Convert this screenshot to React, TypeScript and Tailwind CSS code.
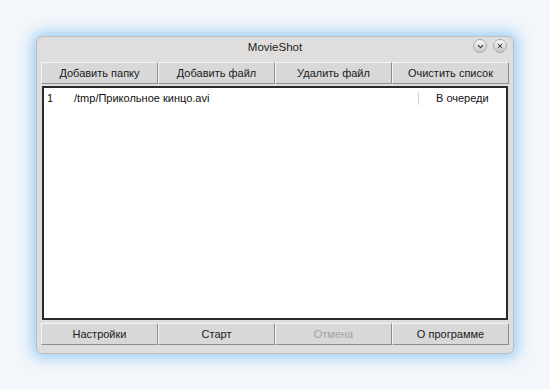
import { X, ChevronDown } from "lucide-react";

const font = { fontFamily: '"Liberation Sans", Arial, sans-serif' };

function Btn({ label, disabled }: { label: string; disabled?: boolean }) {
  return (
    <button
      type="button"
      className={
        "h-[22px] flex-1 border border-t-[#f4f4f4] border-l-[#f4f4f4] border-b-[#8e8e8e] border-r-[#8e8e8e] bg-[#d8d8d8] text-[11px] leading-none " +
        (disabled ? "text-[#a3a3a3]" : "text-[#1a1a1a]")
      }
    >
      {label}
    </button>
  );
}

function TitleButton({ children }: { children: React.ReactNode }) {
  return (
    <div className="flex h-[14px] w-[14px] items-center justify-center rounded-full border border-[#a9a9a9] bg-gradient-to-b from-[#f8f8f8] to-[#c6c6c6] text-[#333]">
      {children}
    </div>
  );
}

export default function App() {
  return (
    <div className="h-[389px] w-[550px] bg-[#f3f6fa] pl-[36px] pt-[36px]" style={font}>
      <div className="flex h-[318px] w-[478px] flex-col rounded-[6px] border border-[#bdbdbd] bg-[#dfdedc] shadow-[0_0_14px_4px_rgba(120,190,245,0.7)]">
        <div className="relative flex h-[22px] shrink-0 items-center justify-center">
          <span className="text-[11.5px] text-[#222]">MovieShot</span>
          <div className="absolute right-[6px] top-[2px] flex gap-[6px]">
            <TitleButton>
              <ChevronDown className="h-[9px] w-[9px]" strokeWidth={3} />
            </TitleButton>
            <TitleButton>
              <X className="h-[8px] w-[8px]" strokeWidth={3} />
            </TitleButton>
          </div>
        </div>

        <div className="flex flex-1 flex-col px-[4px] pt-[3px] pb-[8px]">
          <div className="flex">
            <Btn label="Добавить папку" />
            <Btn label="Добавить файл" />
            <Btn label="Удалить файл" />
            <Btn label="Очистить список" />
          </div>

          <div className="mx-[1px] mt-[2px] mb-[3px] flex-1 border-2 border-[#2a2a2a] bg-white">
            <div className="flex h-[20px] items-center text-[11px] text-[#111]">
              <span className="w-[30px] pl-[3px]">1</span>
              <span className="flex-1">/tmp/Прикольное кинцо.avi</span>
              <span className="h-[13px] border-l border-[#d4d4d4]" />
              <span className="w-[87px] pl-[17px]">В очереди</span>
            </div>
          </div>

          <div className="flex">
            <Btn label="Настройки" />
            <Btn label="Старт" />
            <Btn label="Отмена" disabled />
            <Btn label="О программе" />
          </div>
        </div>
      </div>
    </div>
  );
}
